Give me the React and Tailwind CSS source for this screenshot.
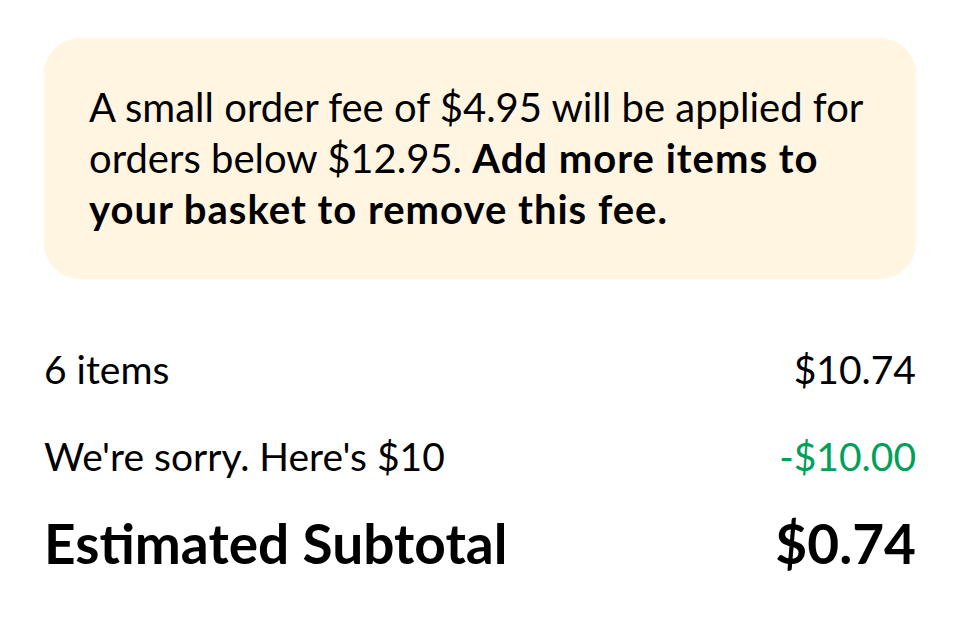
import React from "react";

function Row({ label, value, valueClass = "", big = false }) {
  return (
    <div
      className={
        "flex h-[87px] items-center justify-between " +
        (big ? "text-[55px] font-bold" : "text-[39px]")
      }
    >
      <span>{label}</span>
      <span className={valueClass}>{value}</span>
    </div>
  );
}

export default function App() {
  return (
    <div className="min-h-screen bg-white px-[44px] pt-[38px] text-black font-['Lato',_'Noto_Sans',_sans-serif]">
      <div className="rounded-[36px] bg-[#fff5e0] px-[45px] py-[44px]">
        <p className="text-[40px] leading-[51px]">
          A small order fee of $4.95 will be applied for
          <br />
          orders below $12.95.{" "}
          <span className="font-bold tracking-[1px]">
            Add more items to
            <br />
            your basket to remove this fee.
          </span>
        </p>
      </div>

      <div className="mt-[47px]">
        <Row label="6 items" value="$10.74" />
        <Row
          label="We're sorry. Here's $10"
          value="-$10.00"
          valueClass="text-[#00a05a]"
        />
        <Row label="Estimated Subtotal" value="$0.74" big />
      </div>
    </div>
  );
}
